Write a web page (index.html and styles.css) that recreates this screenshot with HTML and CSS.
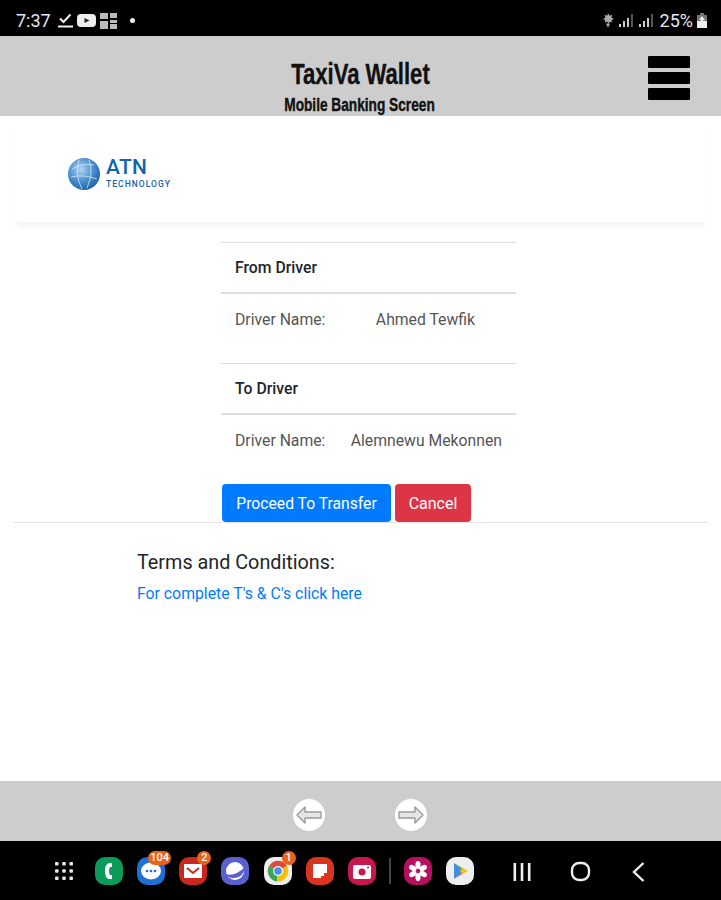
FILE: index.html
```html
<!DOCTYPE html>
<html>
<head>
<meta name="viewport" content="width=device-width, initial-scale=1">
<title>TaxiVa Wallet</title>
<link rel="stylesheet" href="styles.css">
</head>
<body>
  <div class="statusbar">
    <div class="status-left">
      <span class="clock">7:37</span>
      <svg width="15" height="15" viewBox="0 0 15 15"><path d="M2 5.500l3.500 3.500 7-7.500" fill="none" stroke="#eee" stroke-width="2"/><rect x="0" y="12.500" width="15" height="2" fill="#eee"/></svg>
      <svg width="19" height="13" viewBox="0 0 19 13"><rect width="19" height="13" rx="4" fill="#eee"/><path d="M7.500 4l5 2.500-5 2.500z" fill="#222"/></svg>
      <svg width="17" height="17" viewBox="0 0 17 17"><path d="M0 1h8v6H0zM10 1h7v5h-7zM0 9h8v8H0zM10 8h7v3h-7zM10 12h7v5h-7z" fill="#bbb"/></svg>
      <span class="dot"></span>
    </div>
    <div class="status-right">
      <svg width="12" height="16" viewBox="0 0 14 16"><path d="M7 0l2 3 3-1-1 3 3 2-3 1 1 3-3-1-1 2-2-2-3 1 1-3-3-1 3-2-1-3 3 1zM5 12h4v2H5zM6 14h2v2H6z" fill="#aaa"/></svg>
      <svg class="signal" width="16" height="13" viewBox="0 0 16 13"><path d="M1 10h2v3H1zM5 7h2v6H5zM9 4h2v9H9z" fill="#ccc"/><path d="M13 0h2v13h-2z" fill="#555"/></svg>
      <svg class="signal" width="16" height="13" viewBox="0 0 16 13"><path d="M1 10h2v3H1zM5 7h2v6H5zM9 4h2v9H9z" fill="#ccc"/><path d="M13 0h2v13h-2z" fill="#555"/></svg>
      <span class="battery-text">25%</span>
      <svg width="10" height="15" viewBox="0 0 10 15"><path d="M3 0h4v2h3v13H0V2h3z" fill="#777"/><path d="M0 8h10v7H0z" fill="#eee"/><path d="M5 3l3 4H6v2H4V7H2z" fill="#eee"/></svg>
    </div>
  </div>

  <div class="header">
    <h1>TaxiVa Wallet</h1>
    <h2>Mobile Banking Screen</h2>
    <div class="burger"><span></span><span></span><span></span></div>
  </div>

  <div class="content">
    <div class="logo-card">
      <svg class="globe" width="34" height="34" viewBox="0 0 34 34">
        <defs><radialGradient id="gl" cx="0.4" cy="0.35" r="0.7"><stop offset="0" stop-color="#b4d4ef"/><stop offset="0.55" stop-color="#4a8fd0"/><stop offset="1" stop-color="#1c5fa6"/></radialGradient></defs>
        <circle cx="17" cy="17" r="16" fill="url(#gl)"/>
        <path d="M5 12q9-6 22-4M4 20q12-3 26 2M12 3q-5 13 3 29M22 3q5 12-2 28" fill="none" stroke="#d5e6f6" stroke-width="0.8"/>
      </svg>
      <div class="logo-text">
        <span class="logo-atn">ATN</span>
        <span class="logo-tech">TECHNOLOGY</span>
      </div>
    </div>

    <div class="transfer">
      <div class="row row-head">From Driver</div>
      <div class="row row-body row-tall"><span>Driver Name:</span><span class="driver">Ahmed Tewfik</span></div>
      <div class="row row-head">To Driver</div>
      <div class="row row-body"><span>Driver Name:</span><span class="driver">Alemnewu Mekonnen</span></div>
      <div class="buttons">
        <button class="btn btn-blue">Proceed To Transfer</button>
        <button class="btn btn-red">Cancel</button>
      </div>
    </div>
    <div class="rule"></div>

    <div class="terms">
      <h3>Terms and Conditions:</h3>
      <a href="#">For complete T's &amp; C's click here</a>
    </div>
  </div>

  <div class="footer">
    <span class="round">
      <svg width="28" height="18" viewBox="0 0 28 18"><path d="M10 1L2 9l8 8v-5h16V6H10z" fill="#e6e6e6" stroke="#999" stroke-width="1.400" stroke-linejoin="round"/></svg>
    </span>
    <span class="round">
      <svg width="28" height="18" viewBox="0 0 28 18"><path d="M18 1l8 8-8 8v-5H2V6h16z" fill="#e6e6e6" stroke="#999" stroke-width="1.400" stroke-linejoin="round"/></svg>
    </span>
  </div>

  <div class="navbar">
    <svg class="apps" width="20" height="20" viewBox="0 0 20 20" fill="#e8e8e8"><rect x="1" y="1" width="3.600" height="3.600" rx="1"/><rect x="8.200" y="1" width="3.600" height="3.600" rx="1"/><rect x="15.400" y="1" width="3.600" height="3.600" rx="1"/><rect x="1" y="8.200" width="3.600" height="3.600" rx="1"/><rect x="8.200" y="8.200" width="3.600" height="3.600" rx="1"/><rect x="15.400" y="8.200" width="3.600" height="3.600" rx="1"/><rect x="1" y="15.400" width="3.600" height="3.600" rx="1"/><rect x="8.200" y="15.400" width="3.600" height="3.600" rx="1"/><rect x="15.400" y="15.400" width="3.600" height="3.600" rx="1"/></svg>
    <div class="dock">
      <span class="app app-phone"><svg width="28" height="28" viewBox="0 0 28 28"><path d="M17 6h-3q-4 1-4 8t4 8h3v-4h-2q-1-1-1-4t1-4h2z" fill="#fff"/></svg></span>
      <span class="app app-msg"><svg width="28" height="28" viewBox="0 0 28 28"><ellipse cx="14" cy="14" rx="10" ry="8.500" fill="#fff"/><circle cx="10" cy="14" r="1.300" fill="#1f6fd6"/><circle cx="14" cy="14" r="1.300" fill="#1f6fd6"/><circle cx="18" cy="14" r="1.300" fill="#1f6fd6"/></svg><b class="badge badge-wide">104</b></span>
      <span class="app app-mail"><svg width="28" height="28" viewBox="0 0 28 28"><rect x="5" y="7" width="18" height="14" fill="#fff"/><path d="M8 11l6 5 6-5" fill="none" stroke="#c8281e" stroke-width="2"/></svg><b class="badge">2</b></span>
      <span class="app app-net"><svg width="28" height="28" viewBox="0 0 28 28"><circle cx="14" cy="14" r="9" fill="#fff"/><path d="M4 17q10 3 20-7q-2 12-12 11q-5 0-8-4z" fill="#5b5fd0"/></svg></span>
      <span class="app app-chrome"><svg width="28" height="28" viewBox="0 0 28 28"><path d="M14 14L5 9a10.400 10.400 0 0 1 18 0z" fill="#dd4b3e"/><path d="M14 14L5 9a10.400 10.400 0 0 0 8 15.400z" fill="#3aa757"/><path d="M14 14l9-5a10.400 10.400 0 0 1-10 15.400z" fill="#f4c20d"/><circle cx="14" cy="14" r="5" fill="#fff"/><circle cx="14" cy="14" r="3.800" fill="#4a8ee8"/></svg><b class="badge">1</b></span>
      <span class="app app-notes"><svg width="28" height="28" viewBox="0 0 28 28"><path d="M7 7h14v9h-3v3h-3v2H7z" fill="#fff"/></svg></span>
      <span class="app app-cam"><svg width="28" height="28" viewBox="0 0 28 28"><rect x="5" y="8" width="18" height="14" rx="2" fill="#fff"/><circle cx="14" cy="15" r="3.500" fill="#c8174f"/><circle cx="20" cy="10.500" r="1" fill="#c8174f"/></svg></span>
      <span class="divider"></span>
      <span class="app app-flower"><svg width="28" height="28" viewBox="0 0 28 28" fill="#fff"><ellipse cx="14" cy="8" rx="2.600" ry="4"/><ellipse cx="14" cy="20" rx="2.600" ry="4"/><ellipse cx="14" cy="8" rx="2.600" ry="4" transform="rotate(60 14 14)"/><ellipse cx="14" cy="8" rx="2.600" ry="4" transform="rotate(120 14 14)"/><ellipse cx="14" cy="8" rx="2.600" ry="4" transform="rotate(240 14 14)"/><ellipse cx="14" cy="8" rx="2.600" ry="4" transform="rotate(300 14 14)"/></svg></span>
      <span class="app app-play"><svg width="28" height="28" viewBox="0 0 28 28"><path d="M8 6l9 8-9 8z" fill="#3b8fe8"/><path d="M8 6l13 8-4 0z" fill="#3aa757"/><path d="M8 22l13-8-4 0z" fill="#dd4b3e"/><path d="M16 11l6 3-6 3-2-3z" fill="#f4c20d"/></svg></span>
    </div>
    <div class="softkeys">
      <svg width="18" height="20" viewBox="0 0 18 20" fill="#eee"><rect x="0.500" y="1" width="2.600" height="18"/><rect x="7.700" y="1" width="2.600" height="18"/><rect x="14.900" y="1" width="2.600" height="18"/></svg>
      <svg width="22" height="22" viewBox="0 0 22 22"><rect x="2" y="2" width="17" height="17" rx="7" fill="none" stroke="#eee" stroke-width="2.400"/></svg>
      <svg width="14" height="22" viewBox="0 0 14 22"><path d="M12.500 2L3 11l9.500 9" fill="none" stroke="#eee" stroke-width="2.400"/></svg>
    </div>
  </div>
</body>
</html>
```
FILE: styles.css
```css
* {
  box-sizing: border-box;
}

html, body {
  margin: 0;
  padding: 0;
}

body {
  width: 721px;
  height: 900px;
  display: flex;
  flex-direction: column;
  font-family: Roboto, "Liberation Sans", sans-serif;
  background: #fff;
  overflow: hidden;
}

/* phone status bar */
.statusbar {
  height: 36px;
  background: #000;
  color: #e6e6e6;
  display: flex;
  justify-content: space-between;
  align-items: center;
  padding: 4px 14px 0 16px;
}

.status-left, .status-right {
  display: flex;
  align-items: center;
}

.status-left {
  gap: 4px;
}

.status-right {
  gap: 4px;
}

.clock {
  font-size: 18px;
  margin-right: 3px;
}

.dot {
  width: 5px;
  height: 5px;
  margin-left: 9px;
  border-radius: 50%;
  background: #eee;
}

.battery-text {
  font-size: 18px;
  margin-left: 2px;
}

/* app header */
.header {
  position: relative;
  height: 80px;
  background: #cdcdcd;
  text-align: center;
  color: #111;
  padding-top: 23px;
  font-family: "Liberation Sans", sans-serif;
}

h1, h2 {
  font-weight: 700;
  -webkit-text-stroke: 0.4px #111;
}

h1 {
  margin: 0;
  font-size: 30px;
  line-height: 30px;
  transform: scaleX(0.735);
}

h2 {
  margin: 6px 2px 0 0;
  font-size: 18px;
  line-height: 20px;
  transform: scaleX(0.76);
}

.burger {
  position: absolute;
  top: 20px;
  right: 31px;
  width: 42px;
  display: flex;
  flex-direction: column;
  gap: 4px;
}

.burger span {
  height: 12px;
  background: #000;
  border-radius: 1px;
}

/* white page */
.content {
  flex: 1;
}

.logo-card {
  height: 106px;
  margin: 0 13px;
  padding: 41px 0 0 54px;
  display: flex;
  gap: 5px;
  box-shadow: 0 7px 8px -4px rgba(0, 0, 0, 0.07);
}

.logo-text {
  display: flex;
  flex-direction: column;
  color: #1264ad;
}

.logo-atn {
  font-size: 21px;
  line-height: 20px;
  font-weight: 500;
  letter-spacing: 0.300px;
}

.logo-tech {
  font-size: 8.500px;
  line-height: 14px;
  font-weight: 500;
  letter-spacing: 1.050px;
}

.transfer {
  width: 295px;
  margin: 20px 0 0 221px;
}

.row {
  padding: 0 14px;
  font-size: 15.750px;
  display: flex;
  justify-content: space-between;
  align-items: center;
}

.row-head {
  height: 52px;
  border-top: 1px solid #dedede;
  border-bottom: 2px solid #dedede;
  font-weight: 500;
  color: #212529;
}

.row-body {
  height: 52px;
  align-items: flex-start;
  padding-top: 16px;
  color: #555;
}

.row-tall {
  height: 69px;
}

.row-tall .driver {
  margin-right: 27px;
}

.buttons {
  display: flex;
  gap: 4px;
  margin: 17px 0 0 1px;
}

.btn {
  height: 38px;
  border: 0;
  border-radius: 4px;
  color: #fff;
  font-family: Roboto, "Liberation Sans", sans-serif;
  font-size: 16px;
  padding: 0;
  white-space: nowrap;
}

.btn-blue {
  width: 169px;
  background: #007bff;
  font-size: 15.700px;
}

.btn-red {
  width: 76px;
  background: #dc3545;
}

.rule {
  height: 1px;
  margin: 0 13px;
  background: #e4e4e4;
}

.terms {
  margin: 28px 0 0 137px;
}

h3 {
  margin: 0;
  font-size: 19.800px;
  line-height: 24px;
  font-weight: 400;
  color: #212529;
}

.terms a {
  display: block;
  margin-top: 9px;
  font-size: 15.800px;
  line-height: 20px;
  color: #007bff;
  text-decoration: none;
}

/* bottom arrows */
.footer {
  height: 60px;
  background: #cdcdcd;
  display: flex;
  justify-content: center;
  align-items: center;
  gap: 70px;
  padding: 7px 2px 0 0;
}

.round {
  width: 32px;
  height: 32px;
  border-radius: 50%;
  background: #fff;
  display: flex;
  align-items: center;
  justify-content: center;
}

/* phone navigation bar */
.navbar {
  position: relative;
  height: 59px;
  background: #000;
  display: flex;
  align-items: center;
  padding-left: 54px;
}

.apps {
  margin-right: 21px;
}

.dock {
  display: flex;
  align-items: center;
  gap: 14.150px;
}

.app {
  position: relative;
  width: 28px;
  height: 28px;
  border-radius: 10px;
  display: block;
}

.app svg {
  display: block;
}

.app-phone { background: #0d9b5c; }
.app-msg { background: #1f6fd6; }
.app-mail { background: #c8281e; }
.app-net { background: #5b5fd0; }
.app-chrome { background: #eee; }
.app-notes { background: #d8341f; }
.app-cam { background: #c8174f; }
.app-flower { background: #b5115f; }
.app-play { background: #eee; }

.badge {
  position: absolute;
  top: -6px;
  right: -4px;
  min-width: 14px;
  height: 14px;
  border-radius: 7px;
  background: #e8641c;
  color: #fff;
  font-size: 11px;
  line-height: 14px;
  font-weight: 500;
  text-align: center;
}

.badge-wide {
  right: -6px;
  width: 23px;
}

.divider {
  width: 2px;
  height: 26px;
  background: #444;
  margin: 0 -1px;
}

.softkeys {
  position: absolute;
  top: 20px;
  left: 513px;
  display: flex;
  align-items: center;
  gap: 39px;
}
```
